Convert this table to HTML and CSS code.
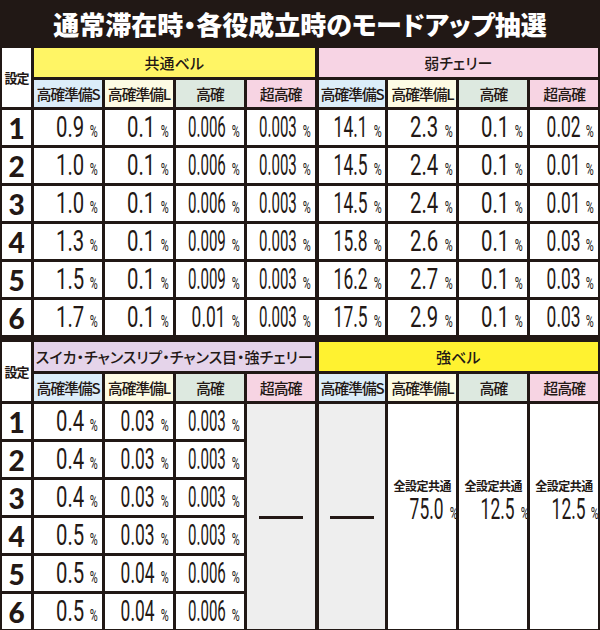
FILE: index.html
```html
<!DOCTYPE html>
<html lang="ja">
<head>
<meta charset="utf-8">
<title>モードアップ抽選</title>
<link rel="stylesheet" href="styles.css">
</head>
<body>
<h1 class="title">通常滞在時・各役成立時のモードアップ抽選</h1>

<div class="tbl">
  <div class="set-h">設定</div>
  <div class="grp g-yellow">共通ベル</div>
  <div class="grp g-pink sep">弱チェリー</div>
  <div class="sub s-blue">高確準備S</div>
  <div class="sub s-cream">高確準備L</div>
  <div class="sub s-green">高確</div>
  <div class="sub s-pink">超高確</div>
  <div class="sub s-blue sep">高確準備S</div>
  <div class="sub s-cream">高確準備L</div>
  <div class="sub s-green">高確</div>
  <div class="sub s-pink">超高確</div>

  <div class="no">1</div>
  <div class="v"><span class="n c3">0.9</span><span class="p">%</span></div>
  <div class="v"><span class="n c3">0.1</span><span class="p">%</span></div>
  <div class="v"><span class="n c5">0.006</span><span class="p">%</span></div>
  <div class="v"><span class="n c5">0.003</span><span class="p">%</span></div>
  <div class="v sep"><span class="n c4">14.1</span><span class="p">%</span></div>
  <div class="v"><span class="n c3">2.3</span><span class="p">%</span></div>
  <div class="v"><span class="n c3">0.1</span><span class="p">%</span></div>
  <div class="v"><span class="n c4">0.02</span><span class="p">%</span></div>

  <div class="no">2</div>
  <div class="v"><span class="n c3">1.0</span><span class="p">%</span></div>
  <div class="v"><span class="n c3">0.1</span><span class="p">%</span></div>
  <div class="v"><span class="n c5">0.006</span><span class="p">%</span></div>
  <div class="v"><span class="n c5">0.003</span><span class="p">%</span></div>
  <div class="v sep"><span class="n c4">14.5</span><span class="p">%</span></div>
  <div class="v"><span class="n c3">2.4</span><span class="p">%</span></div>
  <div class="v"><span class="n c3">0.1</span><span class="p">%</span></div>
  <div class="v"><span class="n c4">0.01</span><span class="p">%</span></div>

  <div class="no">3</div>
  <div class="v"><span class="n c3">1.0</span><span class="p">%</span></div>
  <div class="v"><span class="n c3">0.1</span><span class="p">%</span></div>
  <div class="v"><span class="n c5">0.006</span><span class="p">%</span></div>
  <div class="v"><span class="n c5">0.003</span><span class="p">%</span></div>
  <div class="v sep"><span class="n c4">14.5</span><span class="p">%</span></div>
  <div class="v"><span class="n c3">2.4</span><span class="p">%</span></div>
  <div class="v"><span class="n c3">0.1</span><span class="p">%</span></div>
  <div class="v"><span class="n c4">0.01</span><span class="p">%</span></div>

  <div class="no">4</div>
  <div class="v"><span class="n c3">1.3</span><span class="p">%</span></div>
  <div class="v"><span class="n c3">0.1</span><span class="p">%</span></div>
  <div class="v"><span class="n c5">0.009</span><span class="p">%</span></div>
  <div class="v"><span class="n c5">0.003</span><span class="p">%</span></div>
  <div class="v sep"><span class="n c4">15.8</span><span class="p">%</span></div>
  <div class="v"><span class="n c3">2.6</span><span class="p">%</span></div>
  <div class="v"><span class="n c3">0.1</span><span class="p">%</span></div>
  <div class="v"><span class="n c4">0.03</span><span class="p">%</span></div>

  <div class="no">5</div>
  <div class="v"><span class="n c3">1.5</span><span class="p">%</span></div>
  <div class="v"><span class="n c3">0.1</span><span class="p">%</span></div>
  <div class="v"><span class="n c5">0.009</span><span class="p">%</span></div>
  <div class="v"><span class="n c5">0.003</span><span class="p">%</span></div>
  <div class="v sep"><span class="n c4">16.2</span><span class="p">%</span></div>
  <div class="v"><span class="n c3">2.7</span><span class="p">%</span></div>
  <div class="v"><span class="n c3">0.1</span><span class="p">%</span></div>
  <div class="v"><span class="n c4">0.03</span><span class="p">%</span></div>

  <div class="no">6</div>
  <div class="v"><span class="n c3">1.7</span><span class="p">%</span></div>
  <div class="v"><span class="n c3">0.1</span><span class="p">%</span></div>
  <div class="v"><span class="n c4">0.01</span><span class="p">%</span></div>
  <div class="v"><span class="n c5">0.003</span><span class="p">%</span></div>
  <div class="v sep"><span class="n c4">17.5</span><span class="p">%</span></div>
  <div class="v"><span class="n c3">2.9</span><span class="p">%</span></div>
  <div class="v"><span class="n c3">0.1</span><span class="p">%</span></div>
  <div class="v"><span class="n c4">0.03</span><span class="p">%</span></div>
</div>

<div class="tbl t2">
  <div class="set-h">設定</div>
  <div class="grp g-lav">スイカ・チャンスリプ・チャンス目・強チェリー</div>
  <div class="grp g-yellow2 sep">強ベル</div>
  <div class="sub s-blue">高確準備S</div>
  <div class="sub s-cream">高確準備L</div>
  <div class="sub s-green">高確</div>
  <div class="sub s-pink">超高確</div>
  <div class="sub s-blue sep">高確準備S</div>
  <div class="sub s-cream">高確準備L</div>
  <div class="sub s-green">高確</div>
  <div class="sub s-pink">超高確</div>

  <div class="no">1</div>
  <div class="v"><span class="n c3">0.4</span><span class="p">%</span></div>
  <div class="v"><span class="n c4">0.03</span><span class="p">%</span></div>
  <div class="v"><span class="n c5">0.003</span><span class="p">%</span></div>
  <div class="merged grey"><span class="dash"></span></div>
  <div class="merged grey sep"><span class="dash"></span></div>
  <div class="merged all"><span class="all-l">全設定共通</span><span class="all-v"><span class="n c4">75.0</span><span class="p">%</span></span></div>
  <div class="merged all"><span class="all-l">全設定共通</span><span class="all-v"><span class="n c4">12.5</span><span class="p">%</span></span></div>
  <div class="merged all"><span class="all-l">全設定共通</span><span class="all-v"><span class="n c4">12.5</span><span class="p">%</span></span></div>

  <div class="no">2</div>
  <div class="v"><span class="n c3">0.4</span><span class="p">%</span></div>
  <div class="v"><span class="n c4">0.03</span><span class="p">%</span></div>
  <div class="v"><span class="n c5">0.003</span><span class="p">%</span></div>

  <div class="no">3</div>
  <div class="v"><span class="n c3">0.4</span><span class="p">%</span></div>
  <div class="v"><span class="n c4">0.03</span><span class="p">%</span></div>
  <div class="v"><span class="n c5">0.003</span><span class="p">%</span></div>

  <div class="no">4</div>
  <div class="v"><span class="n c3">0.5</span><span class="p">%</span></div>
  <div class="v"><span class="n c4">0.03</span><span class="p">%</span></div>
  <div class="v"><span class="n c5">0.003</span><span class="p">%</span></div>

  <div class="no">5</div>
  <div class="v"><span class="n c3">0.5</span><span class="p">%</span></div>
  <div class="v"><span class="n c4">0.04</span><span class="p">%</span></div>
  <div class="v"><span class="n c5">0.006</span><span class="p">%</span></div>

  <div class="no">6</div>
  <div class="v"><span class="n c3">0.5</span><span class="p">%</span></div>
  <div class="v"><span class="n c4">0.04</span><span class="p">%</span></div>
  <div class="v"><span class="n c5">0.006</span><span class="p">%</span></div>
</div>
</body>
</html>
```

FILE: styles.css
```css
* {
  box-sizing: border-box;
  margin: 0;
  padding: 0;
}

html,
body {
  background: #211815;
}

body {
  width: 600px;
  height: 630px;
  overflow: hidden;
  font-family: "Noto Sans CJK JP", "Noto Sans", sans-serif;
  color: #231815;
}

.title {
  height: 48px;
  display: flex;
  align-items: center;
  justify-content: center;
  color: #fff;
  font-size: 26px;
  font-weight: 900;
  letter-spacing: 0;
  font-feature-settings: "palt";
  padding-bottom: 2px;
}

.tbl {
  display: grid;
  grid-template-columns: 29px repeat(8, minmax(0, 1fr));
  grid-template-rows: 29px 27px repeat(6, 35px);
  gap: 3px;
  padding: 0 2px;
}

.tbl > * {
  min-width: 0;
}

.t2 {
  margin-top: 7px;
}

.sep {
  margin-left: 1px;
}

.set-h {
  grid-row: span 2;
  background: #fff;
  display: flex;
  align-items: center;
  justify-content: center;
  font-size: 13px;
  font-weight: 700;
  letter-spacing: -1px;
}

.grp {
  grid-column: span 4;
  display: flex;
  align-items: center;
  justify-content: center;
  font-size: 15px;
  font-weight: 500;
  font-feature-settings: "palt";
  white-space: nowrap;
}

.g-yellow { background: #fff565; }
.g-yellow2 { background: #fff230; }
.g-pink { background: #f7d4e4; }
.g-lav { background: #e5d4ea; }

.sub {
  display: flex;
  align-items: center;
  justify-content: center;
  font-size: 15px;
  font-weight: 500;
  letter-spacing: -1.2px;
  white-space: nowrap;
}

.s-blue { background: #dcedf9; }
.s-cream { background: #fdfbe4; }
.s-green { background: #dde9e0; }
.s-pink { background: #f7d4e3; }

.no {
  background: #fff;
  display: flex;
  align-items: center;
  justify-content: center;
  font-family: Lato, "DejaVu Sans", sans-serif;
  font-weight: 900;
  font-size: 28px;
  line-height: 1;
}

.v {
  background: #fff;
  display: flex;
  justify-content: flex-end;
  align-items: baseline;
  padding-right: 4px;
  line-height: 35px;
  white-space: nowrap;
}

.n {
  flex: none;
  font-family: Roboto, "Liberation Sans", sans-serif;
  font-size: 29px;
  font-weight: 400;
  transform-origin: right center;
}

.c3 { transform: scaleX(0.7); }
.c4 { transform: scaleX(0.6); }
.c5 { transform: scaleX(0.52); }

.p {
  flex: none;
  font-family: Roboto, "Liberation Sans", sans-serif;
  font-size: 16px;
  font-weight: 400;
  line-height: 1;
  margin-left: 2px;
  transform: scaleX(0.68);
  transform-origin: right center;
}

.merged {
  grid-row: span 6;
  display: flex;
  align-items: center;
  justify-content: center;
}

.grey {
  background: #eeeeee;
}

.dash {
  width: 44px;
  height: 3px;
  background: #231815;
  margin-top: 1px;
}

.all {
  background: #fff;
  flex-direction: column;
  padding-bottom: 32px;
}

.all-l {
  font-size: 12px;
  font-weight: 700;
  letter-spacing: -0.5px;
  line-height: 16px;
}

.all-v {
  display: flex;
  align-items: baseline;
  line-height: 30px;
  white-space: nowrap;
}
```
